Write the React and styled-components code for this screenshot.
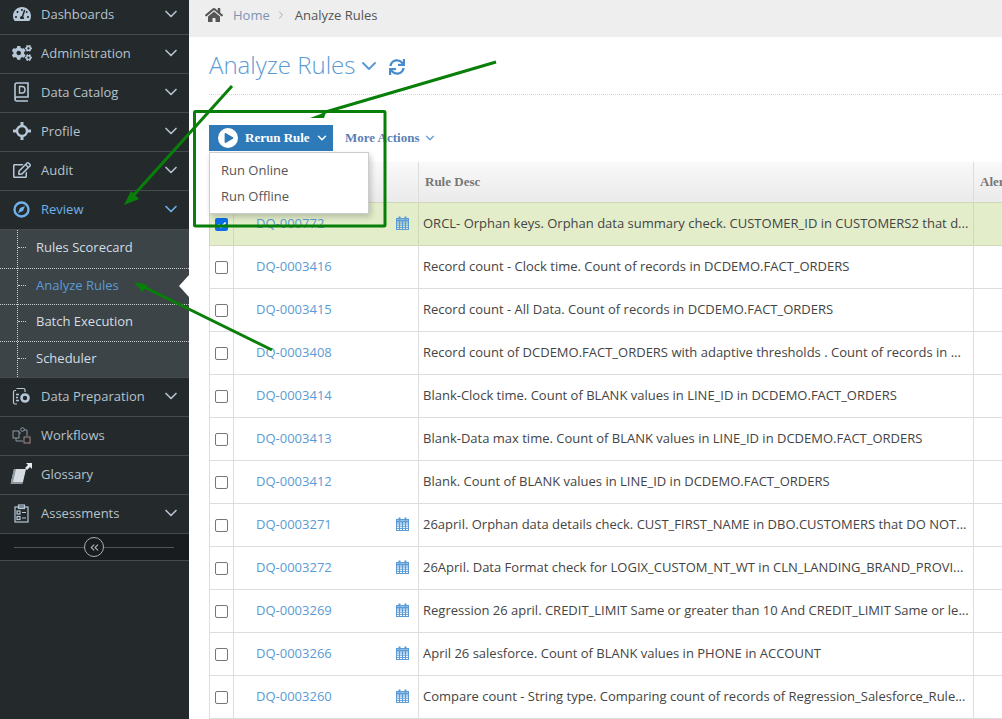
import styled, { createGlobalStyle } from 'styled-components';
import { FaHome, FaSync, FaTachometerAlt, FaCogs, FaRegEdit, FaPlay, FaCheck } from 'react-icons/fa';
import { FiChevronDown, FiChevronRight, FiChevronsLeft } from 'react-icons/fi';

const GlobalStyle = createGlobalStyle`
  html, body {
    margin: 0;
    height: 100%;
    overflow: hidden;
    background: #fff;
    font-family: "Open Sans", "Liberation Sans", sans-serif;
  }
  * { box-sizing: border-box; }
`;

const Page = styled.div`
  position: relative;
  display: flex;
  width: 1002px;
  height: 719px;
  overflow: hidden;
`;

const Sidebar = styled.aside`
  width: 189px;
  flex: none;
  background: #24292c;
  color: #b4bcc8;
`;

const Menu = styled.ul`
  list-style: none;
  margin: -4px 0 0;
  padding: 0;
`;

const MenuRow = styled.li`
  display: flex;
  align-items: center;
  height: 39px;
  padding: 0 8px 2px 11px;
  border-bottom: 1px solid #454c50;
  font-size: 13px;
  color: ${({ $active }) => ($active ? '#6fb1e8' : '#b6c2cd')};
  svg.chev { margin-left: auto; color: ${({ $active }) => ($active ? '#6fb1e8' : '#b6c2cd')}; }
`;

const MenuIcon = styled.span`
  display: flex;
  align-items: center;
  justify-content: center;
  width: 21px;
  height: 22px;
  margin-right: 9px;
  color: #b6c8d8;
`;

const SubMenu = styled.ul`
  position: relative;
  list-style: none;
  margin: 0;
  padding: 0;
  background: #3c4447;
  border-bottom: 1px solid #454c50;
  &::before {
    content: '';
    position: absolute;
    left: 17px;
    top: 0;
    bottom: 0;
    border-left: 1px dotted #c8cdd0;
  }
`;

const SubRow = styled.li`
  position: relative;
  display: flex;
  align-items: center;
  height: ${({ $h }) => $h}px;
  padding: 0 0 ${({ $pad }) => $pad}px 36px;
  font-size: 13px;
  color: ${({ $active }) => ($active ? '#5b9bd5' : '#d3dde4')};
  border-bottom: ${({ $last }) => ($last ? 'none' : '1px dotted #c8cdd0')};
  &::before {
    content: '';
    position: absolute;
    left: 18px;
    top: calc(50% - 2px);
    width: 8px;
    border-top: 1px dotted #c8cdd0;
  }
`;

const ActiveNotch = styled.span`
  position: absolute;
  right: 0;
  top: 6px;
  width: 0;
  height: 0;
  border-top: 11px solid transparent;
  border-bottom: 11px solid transparent;
  border-right: 10px solid #fff;
`;

const CollapseBar = styled.div`
  position: relative;
  display: flex;
  align-items: center;
  justify-content: center;
  height: 27px;
  padding-right: 1px;
  background: #191c1e;
  border-bottom: 1px solid #454c50;
  &::before {
    content: '';
    position: absolute;
    left: 14px;
    right: 15px;
    top: 13px;
    border-top: 1px solid #4d5357;
  }
`;

const CollapseButton = styled.span`
  position: relative;
  display: flex;
  align-items: center;
  justify-content: center;
  width: 20px;
  height: 20px;
  border: 1px solid #a9afb3;
  border-radius: 50%;
  background: #191c1e;
  color: #a9afb3;
`;

const Main = styled.main`
  flex: 1;
  min-width: 0;
`;

const Breadcrumb = styled.nav`
  display: flex;
  align-items: center;
  height: 37px;
  padding: 0 0 7px 16px;
  background: #eeeeee;
  font-size: 13px;
  color: #555;
  svg.home { color: #555; margin-right: 10px; }
  svg.sep { color: #aaa; margin: 0 8px 0 5px; }
`;

const HomeLink = styled.span`
  color: #7d93b5;
`;

const Content = styled.div`
  position: relative;
  padding: 0 0 0 20px;
`;

const TitleRow = styled.div`
  display: flex;
  align-items: center;
  height: 58px;
  border-bottom: 1px dotted #d5d5d5;
  color: #5b9bd5;
`;

const Title = styled.h1`
  margin: 0 2px 2px 0;
  font-size: 24px;
  font-weight: 300;
  line-height: 1;
  color: #5b9bd5;
`;

const Refresh = styled(FaSync)`
  margin: 2px 0 0 8px;
  color: #4a8ccb;
`;

const Toolbar = styled.div`
  position: relative;
  display: flex;
  align-items: center;
  height: 26px;
  margin: 30px 0 11px;
`;

const RunButton = styled.div`
  display: flex;
  align-items: center;
  width: 124px;
  height: 26px;
  padding-left: 9px;
  background: #2e7ab8;
  color: #fff;
  font: bold 13px "Liberation Serif", serif;
  svg.caret { margin-left: 5px; }
`;

const PlayCircle = styled.span`
  display: flex;
  align-items: center;
  justify-content: center;
  width: 20px;
  height: 20px;
  margin-right: 7px;
  border-radius: 50%;
  background: #fff;
  color: #2e7ab8;
  padding-left: 2px;
`;

const MoreButton = styled.div`
  display: flex;
  align-items: center;
  margin-left: 12px;
  color: #5a7fb5;
  font: bold 13px "Liberation Serif", serif;
  svg { margin-left: 3px; color: #5b9bd5; }
`;

const Dropdown = styled.ul`
  position: absolute;
  z-index: 2;
  left: 0;
  top: 27px;
  width: 160px;
  height: 62px;
  margin: 0;
  padding: 4px 0 0;
  list-style: none;
  background: #fff;
  border: 1px solid #ccc;
  box-shadow: 2px 3px 6px rgba(0, 0, 0, 0.2);
  font-size: 13px;
  color: #555;
`;

const DropItem = styled.li`
  height: 26px;
  line-height: 26px;
  padding-left: 11px;
`;

const Table = styled.table`
  width: 820px;
  table-layout: fixed;
  border-collapse: collapse;
  font-size: 13px;
`;

const Th = styled.th`
  height: 40px;
  padding: 0 6px;
  text-align: left;
  font: bold 13px "Liberation Serif", serif;
  color: #777;
  background: linear-gradient(#f9f9f9, #eaeaea);
  border-left: 1px solid #ddd;
`;

const Row = styled.tr`
  height: 43px;
  background: ${({ $selected }) => ($selected ? '#e3edca' : '#fff')};
`;

const Td = styled.td`
  padding: 0 4px 2px;
  border: 1px solid ${({ $selected }) => ($selected ? '#cfd9b8' : '#dddddd')};
  color: #444;
  white-space: nowrap;
  overflow: hidden;
`;

const IdCell = styled.div`
  display: flex;
  align-items: center;
  justify-content: space-between;
  padding: 0 5px 0 18px;
  color: #5b9bd5;
`;

const CheckBox = styled.span`
  display: flex;
  align-items: center;
  justify-content: center;
  width: 13px;
  height: 13px;
  margin: 4px 0 0 1px;
  border: ${({ $on }) => ($on ? 'none' : '1px solid #767676')};
  border-radius: 2px;
  background: ${({ $on }) => ($on ? '#0a6fe8' : '#fff')};
  color: #fff;
`;

const Annotations = styled.svg`
  position: absolute;
  z-index: 3;
  left: 0;
  top: 0;
  pointer-events: none;
`;

const GaugeIcon = () => <FaTachometerAlt size={18} />;

const BookIcon = () => (
  <svg width="17" height="20" viewBox="0 0 17 20" fill="none" stroke="currentColor">
    <path d="M2 16V3a2 2 0 0 1 2-2h11v14H4a2 2 0 0 0 0 4h11" strokeWidth="1.6" />
    <path d="M6.500 4.500h2.500a3 3 0 0 1 3 3v.5a3 3 0 0 1-3 3H6.500z" strokeWidth="1.4" />
  </svg>
);

const TargetIcon = () => (
  <svg width="18" height="18" viewBox="0 0 18 18" fill="none" stroke="currentColor">
    <circle cx="9" cy="9" r="5" strokeWidth="2.400" />
    <path d="M9 0v4M9 14v4M0 9h4M14 9h4" strokeWidth="3" />
  </svg>
);

const CompassIcon = () => (
  <svg width="17" height="17" viewBox="0 0 17 17" fill="none">
    <circle cx="8.500" cy="8.500" r="7" stroke="#6fb1e8" strokeWidth="2.400" />
    <path d="M12 5l-2 5-5 2 2-5z" fill="#6fb1e8" />
  </svg>
);

const PrepIcon = () => (
  <svg width="19" height="19" viewBox="0 0 19 19" fill="none" stroke="currentColor">
    <path d="M5 17H3a1.500 1.500 0 0 1-1.500-1.500V5A1.500 1.500 0 0 1 3 3.500h1M4.500 1.500h7a1.500 1.500 0 0 1 1.500 1.500v2" strokeWidth="1.200" />
    <path d="M4 7.500h3M4 10.500h2M4 13.500h3" strokeWidth="1.400" />
    <circle cx="13" cy="11" r="3.500" strokeWidth="2.600" />
  </svg>
);

const FlowIcon = () => (
  <svg width="19" height="17" viewBox="0 0 19 17" fill="none" stroke="#8e9aa4" strokeWidth="1">
    <rect x="1" y="4" width="6" height="7" />
    <circle cx="10.500" cy="2.500" r="1.800" />
    <path d="M7 6h2M12 3h3v6M4 11v3h7" />
    <rect x="12" y="10" width="6" height="6" stroke="#a98a8a" />
  </svg>
);

const GlossaryIcon = () => (
  <svg width="24" height="24" viewBox="0 0 24 24" style={{ flex: 'none', marginLeft: -2 }}>
    <path d="M5 7h12l-3 13H2z" fill="#d5dde3" />
    <path d="M5 7h2L4 20H2z" fill="#8c979e" />
    <path d="M2 20l-.5 2h12l.5-2z" fill="#8c979e" />
    <path d="M17 1h6v6l-2-2-3 3-2-2 3-3z" fill="#e4eaee" />
  </svg>
);

const ClipboardIcon = () => (
  <svg width="15" height="19" viewBox="0 0 15 19" fill="none" stroke="currentColor" strokeWidth="1.200">
    <rect x="1" y="3" width="13" height="15" />
    <rect x="4.500" y="1" width="6" height="3.500" />
    <rect x="3" y="7" width="3" height="3" />
    <rect x="3" y="12.500" width="3" height="3" />
    <path d="M8 8.500h4M8 14h4" />
  </svg>
);

const CalendarIcon = () => (
  <svg width="13" height="14" viewBox="0 0 13 14" fill="none" stroke="#5b9bd5">
    <rect x="0.500" y="2.500" width="12" height="11" strokeWidth="1" />
    <path d="M0 4.500h13" strokeWidth="2.200" />
    <path d="M3.500 0.500v3M9.500 0.500v3" strokeWidth="2" />
    <path d="M0.500 7h12M0.500 9.200h12M0.500 11.400h12M3.500 5v8M6.500 5v8M9.500 5v8" strokeWidth="1" />
  </svg>
);

const topItems = [
  { label: 'Dashboards', icon: <GaugeIcon />, chev: true },
  { label: 'Administration', icon: <FaCogs size={20} />, chev: true },
  { label: 'Data Catalog', icon: <BookIcon />, chev: true },
  { label: 'Profile', icon: <TargetIcon />, chev: true },
  { label: 'Audit', icon: <FaRegEdit size={18} />, chev: true },
  { label: 'Review', icon: <CompassIcon />, chev: true, active: true },
];

const subItems = [
  { label: 'Rules Scorecard', h: 39, pad: 5 },
  { label: 'Analyze Rules', h: 36, pad: 3, active: true },
  { label: 'Batch Execution', h: 37, pad: 5 },
  { label: 'Scheduler', h: 35, pad: 3, last: true },
];

const bottomItems = [
  { label: 'Data Preparation', icon: <PrepIcon />, chev: true },
  { label: 'Workflows', icon: <FlowIcon /> },
  { label: 'Glossary', icon: <GlossaryIcon /> },
  { label: 'Assessments', icon: <ClipboardIcon />, chev: true },
];

const rows = [
  { id: 'DQ-000772', cal: true, selected: true, desc: 'ORCL- Orphan keys. Orphan data summary check. CUSTOMER_ID in CUSTOMERS2 that d...' },
  { id: 'DQ-0003416', desc: 'Record count - Clock time. Count of records in DCDEMO.FACT_ORDERS' },
  { id: 'DQ-0003415', desc: 'Record count - All Data. Count of records in DCDEMO.FACT_ORDERS' },
  { id: 'DQ-0003408', desc: 'Record count of DCDEMO.FACT_ORDERS with adaptive thresholds . Count of records in ...' },
  { id: 'DQ-0003414', desc: 'Blank-Clock time. Count of BLANK values in LINE_ID in DCDEMO.FACT_ORDERS' },
  { id: 'DQ-0003413', desc: 'Blank-Data max time. Count of BLANK values in LINE_ID in DCDEMO.FACT_ORDERS' },
  { id: 'DQ-0003412', desc: 'Blank. Count of BLANK values in LINE_ID in DCDEMO.FACT_ORDERS' },
  { id: 'DQ-0003271', cal: true, desc: '26april. Orphan data details check. CUST_FIRST_NAME in DBO.CUSTOMERS that DO NOT...' },
  { id: 'DQ-0003272', cal: true, desc: '26April. Data Format check for LOGIX_CUSTOM_NT_WT in CLN_LANDING_BRAND_PROVI...' },
  { id: 'DQ-0003269', cal: true, desc: 'Regression 26 april. CREDIT_LIMIT Same or greater than 10 And CREDIT_LIMIT Same or le...' },
  { id: 'DQ-0003266', cal: true, desc: 'April 26 salesforce. Count of BLANK values in PHONE in ACCOUNT' },
  { id: 'DQ-0003260', cal: true, desc: 'Compare count - String type. Comparing count of records of Regression_Salesforce_Rule...' },
];

function MenuEntry({ item }) {
  return (
    <MenuRow $active={item.active}>
      <MenuIcon>{item.icon}</MenuIcon>
      {item.label}
      {item.chev && <FiChevronDown className='chev' size={20} strokeWidth={2} />}
    </MenuRow>
  );
}

export default function App() {
  return (
    <Page>
      <GlobalStyle />
      <Sidebar>
        <Menu>
          {topItems.map((item) => (
            <MenuEntry key={item.label} item={item} />
          ))}
          <SubMenu>
            {subItems.map((s) => (
              <SubRow key={s.label} $h={s.h} $pad={s.pad} $active={s.active} $last={s.last}>
                {s.label}
                {s.active && <ActiveNotch />}
              </SubRow>
            ))}
          </SubMenu>
          {bottomItems.map((item) => (
            <MenuEntry key={item.label} item={item} />
          ))}
        </Menu>
        <CollapseBar>
          <CollapseButton>
            <FiChevronsLeft size={13} />
          </CollapseButton>
        </CollapseBar>
      </Sidebar>
      <Main>
        <Breadcrumb>
          <FaHome className='home' size={18} />
          <HomeLink>Home</HomeLink>
          <FiChevronRight className='sep' size={12} />
          Analyze Rules
        </Breadcrumb>
        <Content>
          <TitleRow>
            <Title>Analyze Rules</Title>
            <FiChevronDown size={24} strokeWidth={2} />
            <Refresh size={16} />
          </TitleRow>
          <Toolbar>
            <RunButton>
              <PlayCircle>
                <FaPlay size={10} />
              </PlayCircle>
              Rerun Rule
              <FiChevronDown className='caret' size={14} strokeWidth={2.5} />
            </RunButton>
            <MoreButton>
              More Actions
              <FiChevronDown size={14} strokeWidth={2} />
            </MoreButton>
            <Dropdown>
              <DropItem>Run Online</DropItem>
              <DropItem>Run Offline</DropItem>
            </Dropdown>
          </Toolbar>
          <Table>
            <colgroup>
              <col width='24' />
              <col width='185' />
              <col width='555' />
              <col />
            </colgroup>
            <thead>
              <tr>
                <Th />
                <Th />
                <Th>Rule Desc</Th>
                <Th>Alert</Th>
              </tr>
            </thead>
            <tbody>
              {rows.map((r) => (
                <Row key={r.id} $selected={r.selected}>
                  <Td $selected={r.selected}>
                    <CheckBox $on={r.selected}>{r.selected && <FaCheck size={8} />}</CheckBox>
                  </Td>
                  <Td $selected={r.selected}>
                    <IdCell>
                      {r.id}
                      {r.cal && <CalendarIcon />}
                    </IdCell>
                  </Td>
                  <Td $selected={r.selected}>{r.desc}</Td>
                  <Td $selected={r.selected} />
                </Row>
              ))}
            </tbody>
          </Table>
        </Content>
      </Main>
      <Annotations width='1002' height='719' viewBox='0 0 1002 719' fill='none'>
        <rect x='194.500' y='111.500' width='190.500' height='114.500' rx='1' stroke='#087f08' strokeWidth='3' />
        <path d='M232 86L132 197' stroke='#087f08' strokeWidth='3' />
        <path d='M124 205l15-6-8-8z' fill='#087f08' />
        <path d='M496 62L322 113' stroke='#087f08' strokeWidth='3' />
        <path d='M310 118l16-6-2 6z' fill='#087f08' />
        <path d='M272 350L144 287' stroke='#087f08' strokeWidth='3' />
        <path d='M134 282l8 10 6-7z' fill='#087f08' />
      </Annotations>
    </Page>
  );
}
